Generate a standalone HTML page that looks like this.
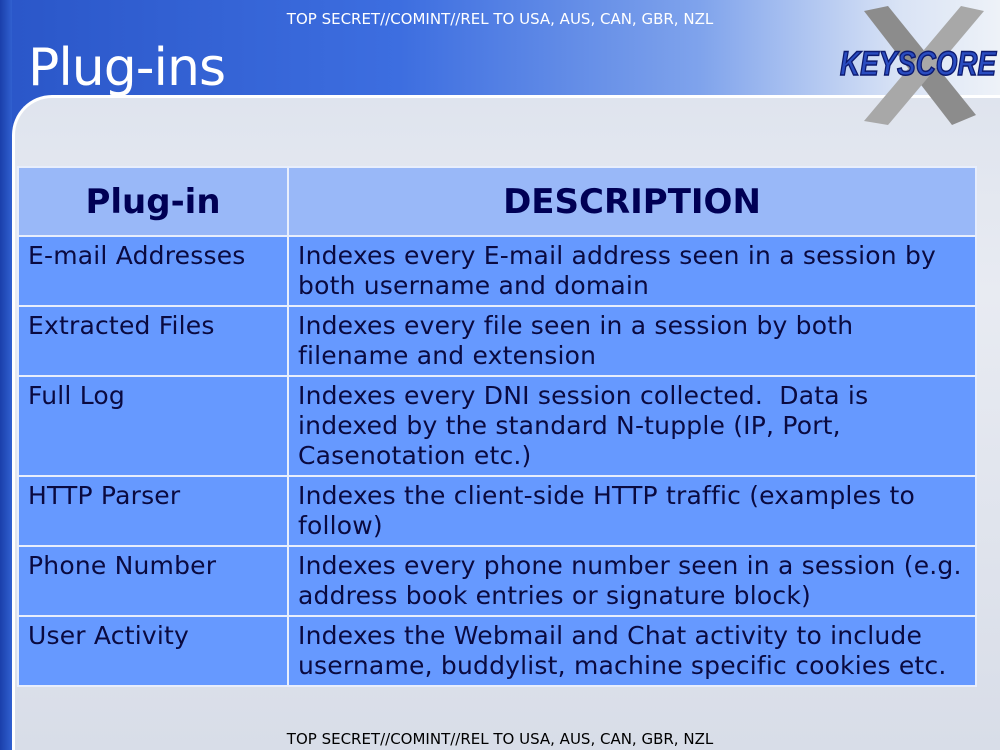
<!DOCTYPE html><html><head><style>
html,body{margin:0;width:1000px;height:750px;overflow:hidden}
body{position:relative;font-family:"DejaVu Sans","Liberation Sans",sans-serif;
background:linear-gradient(90deg,#2a56c8 0%,#3d6ee0 40%,#7fa3ec 70%,#d9e3f5 90%,#eef2f8 100%);}
.panel{position:absolute;left:12px;top:95px;width:985px;height:652px;border-top-left-radius:40px;border-top:3px solid #fff;border-left:3px solid #fff;
background:linear-gradient(180deg,#dfe4ee 0%,#e8ebf2 30%,#d8dde8 100%);}
.strip{position:absolute;left:0;top:0;width:12px;height:750px;background:linear-gradient(90deg,#1a3faa,#3160d0);}
.cls{position:absolute;left:0;width:1000px;text-align:center;font-size:15px;color:#fff}
h1{position:absolute;left:28px;top:38px;margin:0;font-weight:normal;color:#fff;font-size:52px;letter-spacing:-1px}
table{position:absolute;left:17px;top:166px;width:960px;border-collapse:collapse;table-layout:fixed}
td{border:2px solid #e8eefc;background:#6699ff;color:#0a0a40;font-size:25px;letter-spacing:0.2px;line-height:30px;vertical-align:top;padding:4px 9px 0 9px;box-sizing:border-box;overflow:hidden}
th{border:2px solid #e8eefc;background:#99b8f8;color:#000055;font-size:34px;height:69px;padding:0;box-sizing:border-box;font-weight:bold;line-height:40px}
.logo{position:absolute;left:836px;top:3px;width:164px;height:125px}
</style></head><body>
<div class="strip"></div>
<div class="cls" style="top:10px">TOP SECRET//COMINT//REL TO USA, AUS, CAN, GBR, NZL</div>
<h1>Plug-ins</h1>
<div class="panel"></div>
<svg class="logo" viewBox="0 0 164 125"><path d="M28 8 L52 3 L140 112 L116 122Z" fill="#8c8c8c"/><path d="M125 3 L148 8 L52 122 L28 118Z" fill="#a8a8a8"/><text x="82" y="72" text-anchor="middle" font-family="Liberation Sans" font-weight="bold" font-style="italic" font-size="34" fill="#2a4cc0" stroke="#0c1a70" stroke-width="1.5" textLength="156" lengthAdjust="spacingAndGlyphs">KEYSCORE</text></svg>
<table>
<colgroup><col style="width:270px"><col></colgroup>
<tr><th>Plug-in</th><th>DESCRIPTION</th></tr>
<tr><td style="height:70px">E-mail Addresses</td><td>Indexes every E-mail address seen in a session by both username and domain</td></tr>
<tr><td style="height:70px">Extracted Files</td><td>Indexes every file seen in a session by both<br>filename and extension</td></tr>
<tr><td style="height:100px">Full Log</td><td>Indexes every DNI session collected.&nbsp; Data is indexed by the standard N-tupple (IP, Port, Casenotation etc.)</td></tr>
<tr><td style="height:70px">HTTP Parser</td><td>Indexes the client-side HTTP traffic (examples to follow)</td></tr>
<tr><td style="height:70px">Phone Number</td><td>Indexes every phone number seen in a session (e.g. address book entries or signature block)</td></tr>
<tr><td style="height:70px">User Activity</td><td>Indexes the Webmail and Chat activity to include username, buddylist, machine specific cookies etc.</td></tr>
</table>
<div class="cls" style="top:730px;color:#000">TOP SECRET//COMINT//REL TO USA, AUS, CAN, GBR, NZL</div>
</body></html>
